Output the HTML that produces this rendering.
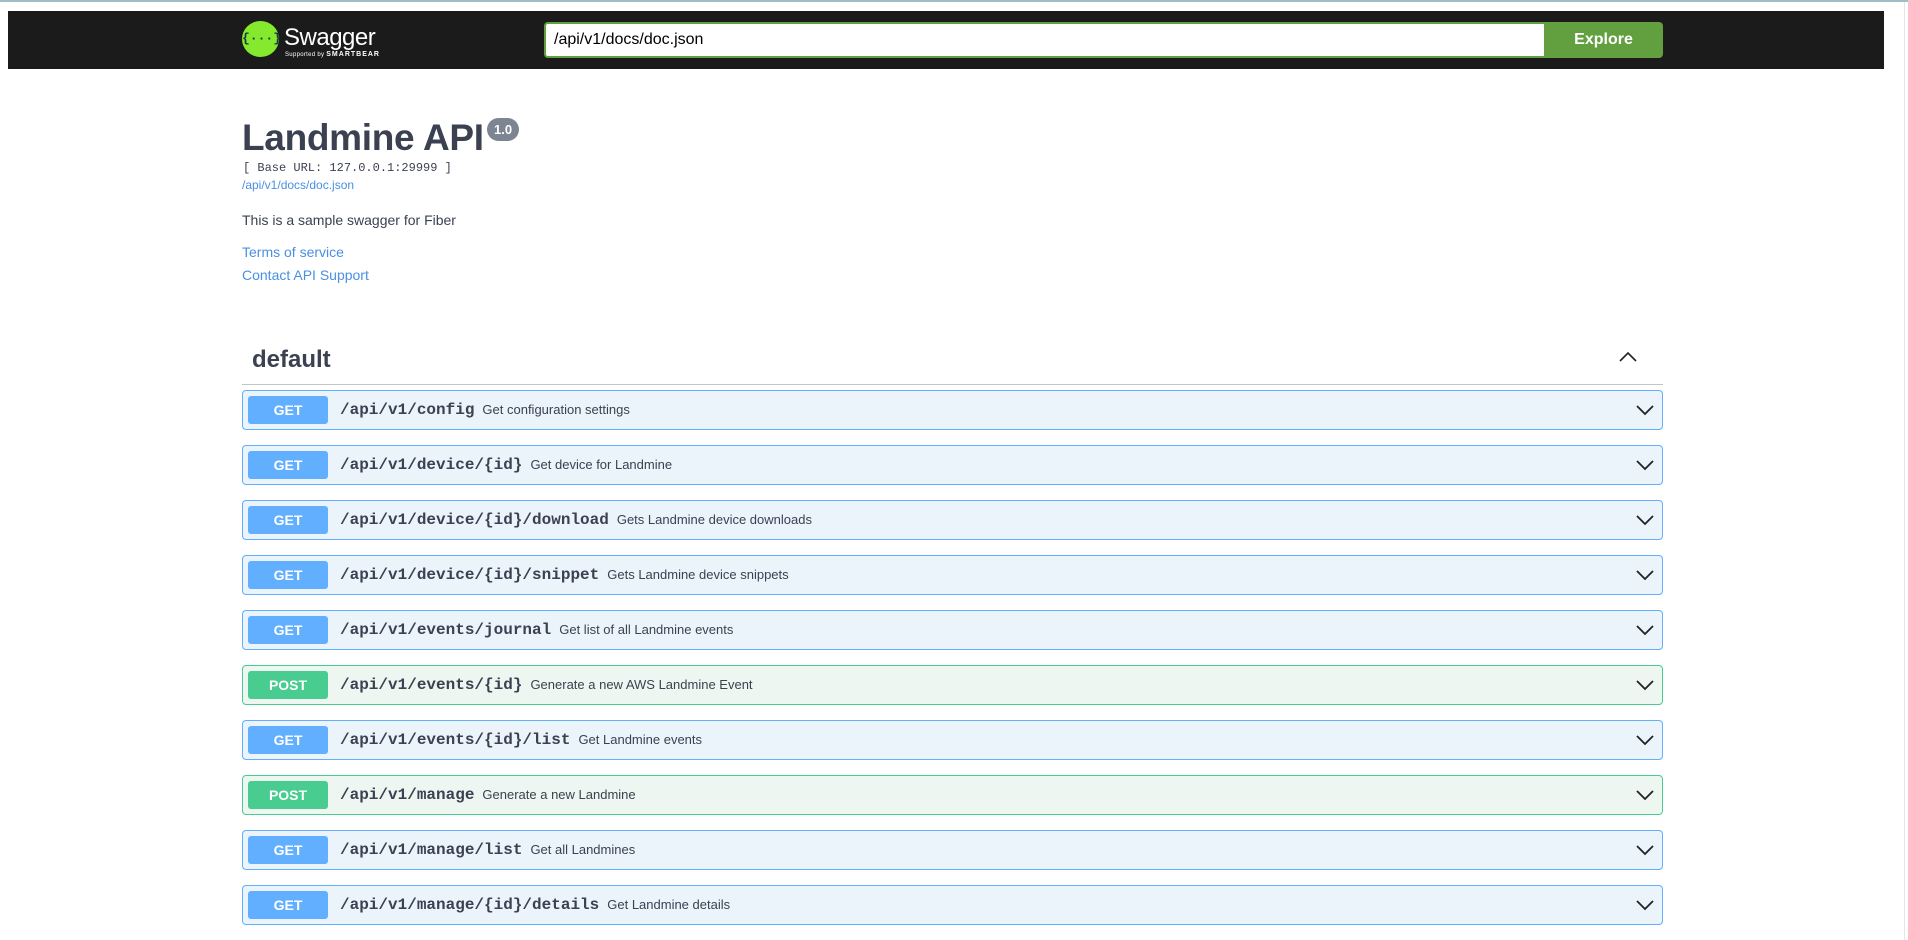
<!DOCTYPE html>
<html><head><meta charset="utf-8"><style>
*{box-sizing:border-box}
body{margin:0;width:1908px;height:940px;overflow:hidden;background:#fff;font-family:"Liberation Sans",sans-serif;color:#3b4151;position:relative}
.topline{position:absolute;left:0;top:0;width:1908px;height:2px;background:#9fbdc6}
.vline{position:absolute;left:1904px;top:2px;width:1px;height:938px;background:#e6e6e6}
.hdr{position:absolute;left:8px;top:11px;width:1876px;height:58px;background:#1b1b1b}
.logo{position:absolute;left:242px;top:21px;width:37px;height:36px;border-radius:50%;background:#85ea2d;color:#173647;font:bold 13px "Liberation Mono",monospace;text-align:center;line-height:36px}
.sw{position:absolute;left:284px;top:24px;color:#fff;font-size:24px;letter-spacing:-0.5px}
.sb{position:absolute;left:285px;top:51px;color:#fff;font-size:6px;letter-spacing:.3px}
.sb b{font-size:7px;letter-spacing:1px}
.inp{position:absolute;left:544px;top:22px;width:1002px;height:36px;border:2px solid #62a03f;border-right:none;border-radius:4px 0 0 4px;background:#fff;font-size:16px;padding:7px 8px;color:#000}
.btn{position:absolute;left:1544px;top:22px;width:119px;height:36px;background:#62a03f;border-radius:0 4px 4px 0;color:#fff;font-weight:bold;font-size:16px;text-align:center;line-height:36px}
.title{position:absolute;left:242px;top:117px;font-size:37px;font-weight:bold;letter-spacing:-0.3px}
.ver{position:absolute;left:487px;top:118px;background:#7d8492;color:#fff;border-radius:57px;font-size:13px;font-weight:bold;padding:4px 7px}
.base{position:absolute;left:243px;top:161px;font:12px "Liberation Mono",monospace;color:#3b4151}
.a{position:absolute;left:242px;color:#4990e2;font-size:14px}
.desc{position:absolute;left:242px;top:212px;font-size:14px}
.def{position:absolute;left:252px;top:346px;font-size:24px;font-weight:bold}
.hr{position:absolute;left:242px;top:384px;width:1421px;height:1px;background:#c5c5c5}
.row{position:absolute;left:242px;width:1421px;height:40px;border:1px solid #61affe;background:#ebf3fb;border-radius:4px}
.row.post{border-color:#49cc90;background:#edf6f0}
.m{position:absolute;left:5px;top:5px;width:80px;height:28px;border-radius:3px;background:#61affe;color:#fff;font-weight:bold;font-size:14px;text-align:center;line-height:28px}
.post .m{background:#49cc90}
.p{position:absolute;left:97px;top:10px;font:bold 16px "Liberation Mono",monospace;color:#3b4151;white-space:nowrap}
.p span{font:13px "Liberation Sans",sans-serif;margin-left:8px}
.chev{position:absolute;right:7px;top:12px}
</style></head><body>
<div class="topline"></div><div class="vline"></div>
<div class="hdr"></div>
<div class="logo">{···}</div>
<div class="sw">Swagger</div>
<div class="sb">Supported by <b>SMARTBEAR</b></div>
<div class="inp">/api/v1/docs/doc.json</div>
<div class="btn">Explore</div>
<div class="title">Landmine API</div>
<div class="ver">1.0</div>
<div class="base">[ Base URL: 127.0.0.1:29999 ]</div>
<div class="a" style="top:178px;font-size:12px">/api/v1/docs/doc.json</div>
<div class="desc">This is a sample swagger for Fiber</div>
<div class="a" style="top:244px">Terms of service</div>
<div class="a" style="top:267px">Contact API Support</div>
<div class="def">default</div>
<svg style="position:absolute;left:1618px;top:351px" width="20" height="12"><path d="M2 10 L10 2 L18 10" fill="none" stroke="#222" stroke-width="1.6"/></svg>
<div class="hr"></div>

<div class="row" style="top:390px"><div class="m">GET</div><div class="p">/api/v1/config<span>Get configuration settings</span></div><svg class="chev" width="20" height="14"><path d="M2 3 L10 11 L18 3" fill="none" stroke="#222" stroke-width="1.8"/></svg></div>
<div class="row" style="top:445px"><div class="m">GET</div><div class="p">/api/v1/device/{id}<span>Get device for Landmine</span></div><svg class="chev" width="20" height="14"><path d="M2 3 L10 11 L18 3" fill="none" stroke="#222" stroke-width="1.8"/></svg></div>
<div class="row" style="top:500px"><div class="m">GET</div><div class="p">/api/v1/device/{id}/download<span>Gets Landmine device downloads</span></div><svg class="chev" width="20" height="14"><path d="M2 3 L10 11 L18 3" fill="none" stroke="#222" stroke-width="1.8"/></svg></div>
<div class="row" style="top:555px"><div class="m">GET</div><div class="p">/api/v1/device/{id}/snippet<span>Gets Landmine device snippets</span></div><svg class="chev" width="20" height="14"><path d="M2 3 L10 11 L18 3" fill="none" stroke="#222" stroke-width="1.8"/></svg></div>
<div class="row" style="top:610px"><div class="m">GET</div><div class="p">/api/v1/events/journal<span>Get list of all Landmine events</span></div><svg class="chev" width="20" height="14"><path d="M2 3 L10 11 L18 3" fill="none" stroke="#222" stroke-width="1.8"/></svg></div>
<div class="row post" style="top:665px"><div class="m">POST</div><div class="p">/api/v1/events/{id}<span>Generate a new AWS Landmine Event</span></div><svg class="chev" width="20" height="14"><path d="M2 3 L10 11 L18 3" fill="none" stroke="#222" stroke-width="1.8"/></svg></div>
<div class="row" style="top:720px"><div class="m">GET</div><div class="p">/api/v1/events/{id}/list<span>Get Landmine events</span></div><svg class="chev" width="20" height="14"><path d="M2 3 L10 11 L18 3" fill="none" stroke="#222" stroke-width="1.8"/></svg></div>
<div class="row post" style="top:775px"><div class="m">POST</div><div class="p">/api/v1/manage<span>Generate a new Landmine</span></div><svg class="chev" width="20" height="14"><path d="M2 3 L10 11 L18 3" fill="none" stroke="#222" stroke-width="1.8"/></svg></div>
<div class="row" style="top:830px"><div class="m">GET</div><div class="p">/api/v1/manage/list<span>Get all Landmines</span></div><svg class="chev" width="20" height="14"><path d="M2 3 L10 11 L18 3" fill="none" stroke="#222" stroke-width="1.8"/></svg></div>
<div class="row" style="top:885px"><div class="m">GET</div><div class="p">/api/v1/manage/{id}/details<span>Get Landmine details</span></div><svg class="chev" width="20" height="14"><path d="M2 3 L10 11 L18 3" fill="none" stroke="#222" stroke-width="1.8"/></svg></div>
</body></html>
